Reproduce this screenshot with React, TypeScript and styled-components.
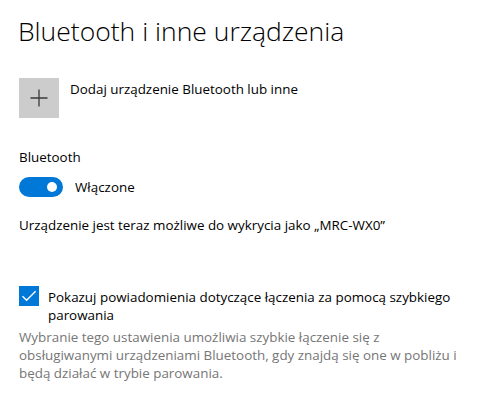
import React, { useState } from "react"
import styled, { createGlobalStyle } from "styled-components"

const GlobalStyle = createGlobalStyle`
  html, body {
    margin: 0;
    padding: 0;
    background: #ffffff;
  }
  body {
    font-family: "Open Sans", "Noto Sans", sans-serif;
    color: #000000;
  }
`

const App: React.FC = () => {
  // Settings states
  const [bluetoothOn, setBluetoothOn] = useState(true)
  const [swiftPair, setSwiftPair] = useState(true)

  return (
    <Page>
      <GlobalStyle />
      <Title>Bluetooth i inne urządzenia</Title>

      <AddRow>
        <AddTile aria-label="Dodaj">
          <svg width="18" height="18" viewBox="0 0 18 18">
            <path d="M9 0.5V17.5M0.5 9H17.5" stroke="#3a3a3a" strokeWidth="1.3" />
          </svg>
        </AddTile>
        <AddLabel>Dodaj urządzenie Bluetooth lub inne</AddLabel>
      </AddRow>

      <SectionLabel>Bluetooth</SectionLabel>
      <ToggleRow>
        <Toggle $on={bluetoothOn} onClick={() => setBluetoothOn(!bluetoothOn)}>
          <Knob $on={bluetoothOn} />
        </Toggle>
        <ToggleText>{bluetoothOn ? "Włączone" : "Wyłączone"}</ToggleText>
      </ToggleRow>
      <Info>Urządzenie jest teraz możliwe do wykrycia jako „MRC-WX0”</Info>

      <CheckRow>
        <CheckBox $checked={swiftPair} onClick={() => setSwiftPair(!swiftPair)}>
          {swiftPair && (
            <svg width="20" height="20" viewBox="0 0 20 20">
              <path d="M3.5 10.2L7.6 14.3L16.6 5.3" fill="none" stroke="#ffffff" strokeWidth="1.4" />
            </svg>
          )}
        </CheckBox>
        <CheckLabel>Pokazuj powiadomienia dotyczące łączenia za pomocą szybkiego parowania</CheckLabel>
      </CheckRow>
      <Description>
        Wybranie tego ustawienia umożliwia szybkie łączenie się z obsługiwanymi urządzeniami
        Bluetooth, gdy znajdą się one w pobliżu i będą działać w trybie parowania.
      </Description>
    </Page>
  )
}

const Page = styled.div`
  width: 482px;
  height: 401px;
  box-sizing: border-box;
  padding: 12px 0 0 19px;
  overflow: hidden;
`

const Title = styled.h1`
  margin: 0 0 0 -1px;
  font-weight: 300;
  font-size: 26.5px;
  line-height: 38px;
`

const AddRow = styled.div`
  display: flex;
  align-items: flex-start;
  gap: 11px;
  margin-top: 28px;
`

const AddTile = styled.div`
  width: 40px;
  height: 40px;
  background: #cccccc;
  display: flex;
  align-items: center;
  justify-content: center;
`

const AddLabel = styled.div`
  font-size: 13.4px;
  line-height: 20px;
  padding-top: 1px;
`

const SectionLabel = styled.div`
  margin-top: 29px;
  font-size: 13.4px;
  line-height: 20px;
`

const ToggleRow = styled.div`
  display: flex;
  align-items: center;
  gap: 12px;
  margin-top: 10px;
`

const Toggle = styled.div<{ $on: boolean }>`
  width: 44px;
  height: 20px;
  box-sizing: border-box;
  border-radius: 10px;
  background: ${(p) => (p.$on ? "#0078d7" : "transparent")};
  border: 2px solid ${(p) => (p.$on ? "#0078d7" : "#333333")};
  display: flex;
  align-items: center;
  justify-content: ${(p) => (p.$on ? "flex-end" : "flex-start")};
  padding: 0 4px;
  cursor: pointer;
`

const Knob = styled.div<{ $on: boolean }>`
  width: 10px;
  height: 10px;
  border-radius: 50%;
  background: ${(p) => (p.$on ? "#ffffff" : "#333333")};
`

const ToggleText = styled.div`
  font-size: 13.4px;
  line-height: 20px;
`

const Info = styled.div`
  margin-top: 18px;
  font-size: 13.4px;
  line-height: 20px;
`

const CheckRow = styled.div`
  display: flex;
  align-items: flex-start;
  gap: 9px;
  margin-top: 51px;
`

const CheckBox = styled.div<{ $checked: boolean }>`
  width: 20px;
  height: 20px;
  flex: none;
  box-sizing: border-box;
  background: ${(p) => (p.$checked ? "#0078d7" : "#ffffff")};
  border: ${(p) => (p.$checked ? "none" : "2px solid #333333")};
  cursor: pointer;
`

const CheckLabel = styled.div`
  font-size: 13.4px;
  line-height: 18px;
  width: 420px;
  padding-top: 2px;
`

const Description = styled.div`
  margin-top: 4px;
  width: 450px;
  font-size: 13.4px;
  line-height: 18px;
  color: #767676;
`

export default App
